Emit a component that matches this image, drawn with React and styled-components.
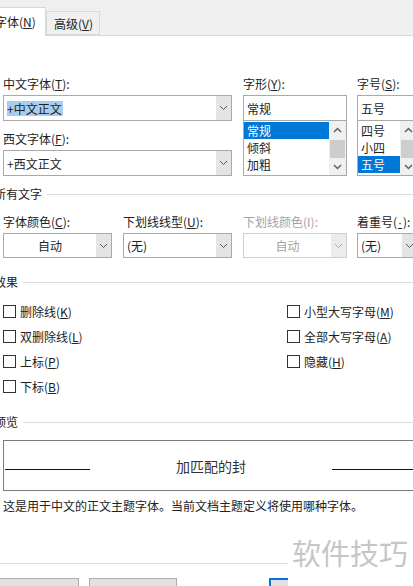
import React from 'react';
import styled, { createGlobalStyle } from 'styled-components';

const GlobalStyle = createGlobalStyle`
  html, body {
    margin: 0;
    padding: 0;
    background: #fff;
  }
  body {
    width: 413px;
    height: 586px;
    overflow: hidden;
    font-family: "Noto Sans CJK SC", "Noto Sans", sans-serif;
    font-size: 12px;
    color: #222;
  }
`;

const Dialog = styled.div`
  position: relative;
  width: 413px;
  height: 586px;
  overflow: hidden;
  background: #fff;
`;

const TabStrip = styled.div`
  height: 36px;
  box-sizing: border-box;
  background: linear-gradient(#eceff2, #f0f0f0 10px);
  border-bottom: 1px solid #d9d9d9;
  display: flex;
  align-items: flex-end;
`;

const Tab = styled.div`
  box-sizing: border-box;
  height: ${(p) => (p.active ? 29 : 24)}px;
  width: ${(p) => p.w}px;
  margin-left: ${(p) => p.ml || 0}px;
  margin-bottom: ${(p) => (p.active ? -1 : 0)}px;
  padding-left: ${(p) => p.pl}px;
  padding-bottom: ${(p) => (p.active ? 2 : 0)}px;
  display: flex;
  align-items: center;
  background: ${(p) => (p.active ? '#fff' : '#f0f0f0')};
  border: 1px solid #d9d9d9;
  border-bottom: ${(p) => (p.active ? 'none' : '1px solid #d9d9d9')};
  white-space: nowrap;
  color: #222;
`;

const Body = styled.div`
  padding-left: 3px;
  display: flex;
  flex-direction: column;
`;

const FieldRow = styled.div`
  display: flex;
  margin-top: ${(p) => p.mt}px;
`;

const Field = styled.div`
  display: flex;
  flex-direction: column;
  flex-shrink: 0;
  width: ${(p) => p.w}px;
  margin-left: ${(p) => p.ml || 0}px;
`;

const Label = styled.div`
  height: 16px;
  line-height: 16px;
  white-space: nowrap;
  margin-top: ${(p) => p.mt || 0}px;
  margin-bottom: 3px;
  color: ${(p) => (p.disabled ? '#a3a3a3' : '#222')};
`;

const Dot = styled.u`
  font-family: "Liberation Sans", sans-serif;
  padding: 0 1px;
`;

const Combo = styled.div`
  box-sizing: border-box;
  height: ${(p) => p.h || 26}px;
  display: flex;
  background: #fff;
  border: 1px solid ${(p) => (p.disabled ? '#cfcfcf' : '#a9a9a9')};
`;

const ComboText = styled.div`
  flex: 1;
  display: flex;
  align-items: center;
  padding-left: ${(p) => (p.center ? 0 : 3)}px;
  justify-content: ${(p) => (p.center ? 'center' : 'flex-start')};
  white-space: nowrap;
  overflow: hidden;
  color: ${(p) => (p.disabled ? '#a3a3a3' : '#222')};
`;

const Selected = styled.span`
  background: #a9cdee;
  line-height: 15px;
  padding: 0 1px 0 0;
`;

const DropButton = styled.div`
  width: 15px;
  flex-shrink: 0;
  display: flex;
  align-items: center;
  justify-content: center;
  background: ${(p) => (p.disabled ? '#ececec' : '#e4e4e4')};
`;

const ListBox = styled.div`
  box-sizing: border-box;
  height: 55px;
  display: flex;
  border: 1px solid #a9a9a9;
  border-top: none;
  background: #fff;
`;

const ListItems = styled.div`
  flex: 1;
  display: flex;
  flex-direction: column;
  padding-top: 1px;
`;

const ListItem = styled.div`
  height: 17px;
  line-height: 17px;
  padding-left: 3px;
  background: ${(p) => (p.selected ? '#0078d7' : 'transparent')};
  color: ${(p) => (p.selected ? '#fff' : '#222')};
`;

const ScrollBar = styled.div`
  width: 17px;
  flex-shrink: 0;
  display: flex;
  flex-direction: column;
  background: #f0f0f0;
`;

const ScrollArrow = styled.div`
  height: 17px;
  display: flex;
  align-items: center;
  justify-content: center;
`;

const ScrollThumb = styled.div`
  flex: 1;
  margin: 2px 1px 0;
  background: #cdcdcd;
`;

const SectionHeader = styled.div`
  display: flex;
  align-items: center;
  height: 16px;
  line-height: 16px;
  margin-left: -9px;
  margin-top: ${(p) => p.mt}px;
  white-space: nowrap;

  &::after {
    content: '';
    flex: 1;
    height: 1px;
    margin-left: 5px;
    background: #dcdcdc;
  }
`;

const CheckGrid = styled.div`
  display: grid;
  grid-template-columns: 284px 1fr;
  grid-auto-rows: 25px;
  margin-top: 9px;
`;

const CheckItem = styled.div`
  display: flex;
  align-items: center;
  white-space: nowrap;
  grid-column: ${(p) => p.col};
  grid-row: ${(p) => p.row};
`;

const CheckBox = styled.span`
  box-sizing: border-box;
  width: 13px;
  height: 13px;
  border: 1px solid #333;
  background: #fff;
  margin-right: 4px;
`;

const PreviewBox = styled.div`
  box-sizing: border-box;
  width: 416px;
  height: 51px;
  margin-top: 10px;
  border: 1px solid #7a7a7a;
  display: flex;
  align-items: center;
`;

const PreviewRule = styled.div`
  width: 85px;
  height: 1px;
  margin: 8px 1px 0;
  background: #111;
`;

const PreviewSample = styled.div`
  flex: 1;
  text-align: center;
  font-size: 14px;
  color: #333;
`;

const Description = styled.div`
  height: 16px;
  line-height: 16px;
  margin-top: 7px;
  white-space: nowrap;
`;

const Separator = styled.div`
  height: 1px;
  margin: 49px 0 0 -3px;
  background: #dcdcdc;
`;

const ButtonRow = styled.div`
  display: flex;
  margin-top: 14px;
  margin-left: -10px;
`;

const Button = styled.div`
  box-sizing: border-box;
  height: 24px;
  width: ${(p) => p.w}px;
  margin-left: ${(p) => p.ml || 0}px;
  background: #e1e1e1;
  border: ${(p) => (p.primary ? '2px solid #0078d7' : '1px solid #adadad')};
`;

const Watermark = styled.div`
  position: absolute;
  left: 288px;
  top: 532px;
  width: 125px;
  height: 54px;
  background: #fff;
  box-sizing: border-box;
  padding: 2px 0 0 4px;
  font-size: 29px;
  line-height: 36px;
  color: #c6c6c6;
  white-space: nowrap;
`;

const Chevron = ({ up, color = '#5a5a5a', bold }) => (
  <svg width="9" height="6" viewBox="0 0 9 6">
    <path
      d={up ? 'M1 5 L4.5 1.5 L8 5' : 'M1 1 L4.5 4.5 L8 1'}
      fill="none"
      stroke={color}
      strokeWidth={bold ? 1.5 : 1}
    />
  </svg>
);

const DropDown = ({ children, center, disabled, h }) => (
  <Combo disabled={disabled} h={h}>
    <ComboText center={center} disabled={disabled}>{children}</ComboText>
    <DropButton disabled={disabled}>
      <Chevron color={disabled ? '#a8a8a8' : '#5a5a5a'} />
    </DropButton>
  </Combo>
);

const PickList = ({ value, items, selected }) => (
  <>
    <Combo>
      <ComboText>{value}</ComboText>
    </Combo>
    <ListBox>
      <ListItems>
        {items.map((it) => (
          <ListItem key={it} selected={it === selected}>{it}</ListItem>
        ))}
      </ListItems>
      <ScrollBar>
        <ScrollArrow><Chevron up bold color="#606060" /></ScrollArrow>
        <ScrollThumb />
        <ScrollArrow><Chevron bold color="#606060" /></ScrollArrow>
      </ScrollBar>
    </ListBox>
  </>
);

const effects = [
  { col: 1, row: 1, text: '删除线', key: 'K' },
  { col: 1, row: 2, text: '双删除线', key: 'L' },
  { col: 1, row: 3, text: '上标', key: 'P' },
  { col: 1, row: 4, text: '下标', key: 'B' },
  { col: 2, row: 1, text: '小型大写字母', key: 'M' },
  { col: 2, row: 2, text: '全部大写字母', key: 'A' },
  { col: 2, row: 3, text: '隐藏', key: 'H' },
];

export default function App() {
  return (
    <Dialog>
      <GlobalStyle />
      <TabStrip>
        <Tab active w={58} ml={-12} pl={6}>字体(<u>N</u>)</Tab>
        <Tab w={54} pl={7}>高级(<u>V</u>)</Tab>
      </TabStrip>

      <Body>
        <FieldRow mt={40}>
          <Field w={229}>
            <Label>中文字体(<u>T</u>):</Label>
            <DropDown><Selected>+中文正文</Selected></DropDown>
            <Label mt={10}>西文字体(<u>F</u>):</Label>
            <DropDown>+西文正文</DropDown>
          </Field>
          <Field w={104} ml={11}>
            <Label>字形(<u>Y</u>):</Label>
            <PickList value="常规" items={['常规', '倾斜', '加粗']} selected="常规" />
          </Field>
          <Field w={61} ml={10}>
            <Label>字号(<u>S</u>):</Label>
            <PickList value="五号" items={['四号', '小四', '五号']} selected="五号" />
          </Field>
        </FieldRow>

        <SectionHeader mt={10}>所有文字</SectionHeader>

        <FieldRow mt={12}>
          <Field w={109}>
            <Label>字体颜色(<u>C</u>):</Label>
            <DropDown center h={25}>自动</DropDown>
          </Field>
          <Field w={109} ml={11}>
            <Label>下划线线型(<u>U</u>):</Label>
            <DropDown h={25}>(无)</DropDown>
          </Field>
          <Field w={104} ml={11}>
            <Label disabled>下划线颜色(I):</Label>
            <DropDown center disabled h={25}>自动</DropDown>
          </Field>
          <Field w={61} ml={10}>
            <Label>着重号(<Dot>·</Dot>):</Label>
            <DropDown h={25}>(无)</DropDown>
          </Field>
        </FieldRow>

        <SectionHeader mt={16}>效果</SectionHeader>

        <CheckGrid>
          {effects.map((e) => (
            <CheckItem key={e.key} col={e.col} row={e.row}>
              <CheckBox />
              {e.text}(<u>{e.key}</u>)
            </CheckItem>
          ))}
        </CheckGrid>

        <SectionHeader mt={15}>预览</SectionHeader>

        <PreviewBox>
          <PreviewRule />
          <PreviewSample>加匹配的封</PreviewSample>
          <PreviewRule />
        </PreviewBox>

        <Description>这是用于中文的正文主题字体。当前文档主题定义将使用哪种字体。</Description>

        <Separator />

        <ButtonRow>
          <Button w={86} />
          <Button w={88} ml={10} />
          <Button w={80} ml={92} primary />
        </ButtonRow>
      </Body>

      <Watermark>软件技巧</Watermark>
    </Dialog>
  );
}
